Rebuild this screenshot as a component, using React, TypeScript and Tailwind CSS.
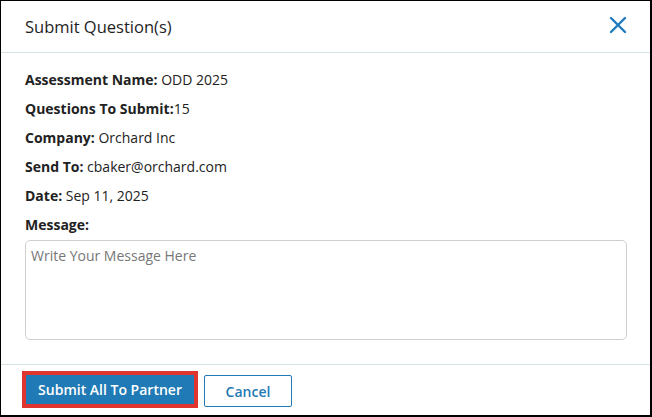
import React from "react";

const Row = ({ label, value, tight }: { label: string; value: string; tight?: boolean }) => (
  <div className="h-[20px] leading-[20px] text-[14px] text-[#222]">
    <span className="font-bold">{label}</span>
    {tight ? "" : " "}
    {value}
  </div>
);

export default function App() {
  return (
    <div
      className="w-[652px] h-[417px] bg-white border-black border-t border-l border-r-2 border-b-2 flex flex-col"
      style={{ fontFamily: '"Open Sans", "Liberation Sans", sans-serif' }}
    >
      <div className="h-[52px] shrink-0 pl-6 pr-[24px] flex items-center justify-between border-b border-[#d6dfe3]">
        <div className="text-[16.5px] text-[#1e1e1e] leading-[22px]">Submit Question(s)</div>
        <svg width="18" height="18" viewBox="0 0 18 18" className="mr-[-1px] mt-[-3px]">
          <path d="M2 2 L16 16 M16 2 L2 16" stroke="#1f7bbd" strokeWidth="2.4" strokeLinecap="round" />
        </svg>
      </div>
      <div className="pl-6 pt-[17px] pb-6 flex flex-col">
        <div className="flex flex-col gap-[9px]">
          <Row label="Assessment Name:" value="ODD 2025" />
          <Row label="Questions To Submit:" value="15" tight />
          <Row label="Company:" value="Orchard Inc" />
          <Row label="Send To:" value="cbaker@orchard.com" />
          <Row label="Date:" value="Sep 11, 2025" />
          <div className="h-[20px] leading-[20px] text-[14px] text-[#222] font-bold">Message:</div>
        </div>
        <textarea
          className="mt-[5px] w-[602px] h-[100px] border border-[#cfcfcf] rounded-[5px] px-[5px] pt-[5px] text-[14px] leading-[20px] text-[#222] placeholder:text-[#777] resize-none outline-none"
          placeholder="Write Your Message Here"
          style={{ fontFamily: '"Open Sans", "Liberation Sans", sans-serif' }}
        />
      </div>
      <div className="flex-1 border-t border-[#d6dfe3] pl-[21px] pt-[6px] flex items-start">
        <div className="border-4 border-[#e0352f]">
          <button className="w-[168px] h-[29px] bg-[#1f7ab5] text-white text-[14px] font-semibold flex items-center justify-center">
            Submit All To Partner
          </button>
        </div>
        <button className="ml-[6px] mt-[4px] w-[88px] h-[32px] border border-[#1f7ab5] rounded-[2px] bg-white text-[#1f7ab5] text-[14px] font-semibold flex items-center justify-center">
          Cancel
        </button>
      </div>
    </div>
  );
}
